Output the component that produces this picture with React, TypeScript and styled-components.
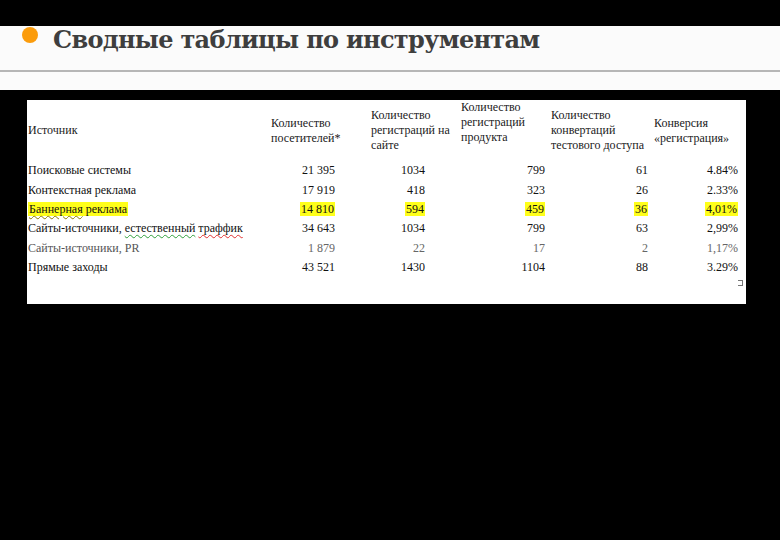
import React from 'react';
import styled, { createGlobalStyle } from 'styled-components';

const GlobalStyle = createGlobalStyle`
  html, body {
    margin: 0;
    padding: 0;
    background: #000;
  }
  body {
    width: 780px;
    height: 540px;
    overflow: hidden;
  }
`;

const Page = styled.div`
  width: 780px;
  height: 540px;
  background: #000;
  padding-top: 26px;
  box-sizing: border-box;
`;

const TitleBand = styled.header`
  height: 64px;
  background: #fbfbfb;
  display: flex;
  flex-direction: column;
`;

const TitleRow = styled.div`
  height: 44px;
  display: flex;
  align-items: flex-start;
  padding-left: 22px;
  gap: 15px;
`;

const Dot = styled.span`
  width: 16px;
  height: 16px;
  border-radius: 50%;
  background: #fb9c0c;
  flex-shrink: 0;
  margin-top: 1px;
`;

const Title = styled.h1`
  margin: 0;
  font-family: 'DejaVu Serif', 'Liberation Serif', serif;
  font-weight: bold;
  font-size: 24px;
  letter-spacing: -0.7px;
  color: #3e3e3e;
  white-space: nowrap;
  line-height: 26px;
  margin-top: 1px;
`;

const Rule = styled.div`
  height: 2px;
  background: #b6b6b6;
`;

const Panel = styled.section`
  position: relative;
  width: 719px;
  height: 204px;
  margin: 10px 0 0 27px;
  background: #fff;
  font-family: 'Liberation Serif', 'Times New Roman', serif;
  font-size: 12px;
  color: #111;
`;

const Grid = styled.div`
  display: grid;
  grid-template-columns: 243px 100px 89px 91px 103px 93px;
  grid-template-rows: 61px repeat(6, 19.4px);
`;

const Head = styled.div<{ $top?: boolean }>`
  align-self: ${(p) => (p.$top ? 'start' : 'center')};
  line-height: 15px;
  padding-left: ${(p) => (p.$top ? '2px' : '1px')};
  white-space: nowrap;
  color: #222;
`;

const Name = styled.div<{ $faded?: boolean }>`
  align-self: center;
  padding-left: 1px;
  white-space: nowrap;
  color: ${(p) => (p.$faded ? '#555' : '#111')};
`;

const Num = styled.div<{ $pr: number; $faded?: boolean }>`
  align-self: center;
  text-align: right;
  padding-right: ${(p) => p.$pr}px;
  white-space: nowrap;
  color: ${(p) => (p.$faded ? '#666' : '#111')};
`;

const Mark = styled.span`
  background: #ffff1a;
  padding: 0 1px;
`;

const Spell = styled.span<{ $color: string }>`
  text-decoration: underline wavy ${(p) => p.$color};
  text-decoration-thickness: 1px;
  text-underline-offset: 2px;
`;

const Corner = styled.span`
  position: absolute;
  right: 3px;
  bottom: 18px;
  width: 4px;
  height: 4px;
  border: 1px solid #777;
  border-left: none;
`;

const pads = [35, 34, 5, 5, 8];

type Row = { name: React.ReactNode; values: string[]; hl?: boolean; faded?: boolean };

const rows: Row[] = [
  { name: 'Поисковые системы', values: ['21 395', '1034', '799', '61', '4.84%'] },
  { name: 'Контекстная реклама', values: ['17 919', '418', '323', '26', '2.33%'] },
  {
    name: (
      <Mark>
        <Spell $color="#8a7a00">Баннерная</Spell> реклама
      </Mark>
    ),
    values: ['14 810', '594', '459', '36', '4,01%'],
    hl: true,
  },
  {
    name: (
      <>
        Сайты-источники, <Spell $color="#2e9e3a">естественный</Spell>{' '}
        <Spell $color="#e03030">траффик</Spell>
      </>
    ),
    values: ['34 643', '1034', '799', '63', '2,99%'],
  },
  { name: 'Сайты-источники, PR', values: ['1 879', '22', '17', '2', '1,17%'], faded: true },
  { name: 'Прямые заходы', values: ['43 521', '1430', '1104', '88', '3.29%'] },
];

export default function App() {
  return (
    <>
      <GlobalStyle />
      <Page>
        <TitleBand>
          <TitleRow>
            <Dot />
            <Title>Сводные таблицы по инструментам</Title>
          </TitleRow>
          <Rule />
        </TitleBand>
        <Panel>
          <Grid>
            <Head>Источник</Head>
            <Head>
              Количество
              <br />
              посетителей*
            </Head>
            <Head>
              Количество
              <br />
              регистраций на
              <br />
              сайте
            </Head>
            <Head $top>
              Количество
              <br />
              регистраций
              <br />
              продукта
            </Head>
            <Head>
              Количество
              <br />
              конвертаций
              <br />
              тестового доступа
            </Head>
            <Head>
              Конверсия
              <br />
              «регистрация»
            </Head>
            {rows.map((r, i) => (
              <React.Fragment key={i}>
                <Name $faded={r.faded}>{r.name}</Name>
                {r.values.map((v, j) => (
                  <Num key={j} $pr={pads[j]} $faded={r.faded}>
                    {r.hl ? <Mark>{v}</Mark> : v}
                  </Num>
                ))}
              </React.Fragment>
            ))}
          </Grid>
          <Corner />
        </Panel>
      </Page>
    </>
  );
}
